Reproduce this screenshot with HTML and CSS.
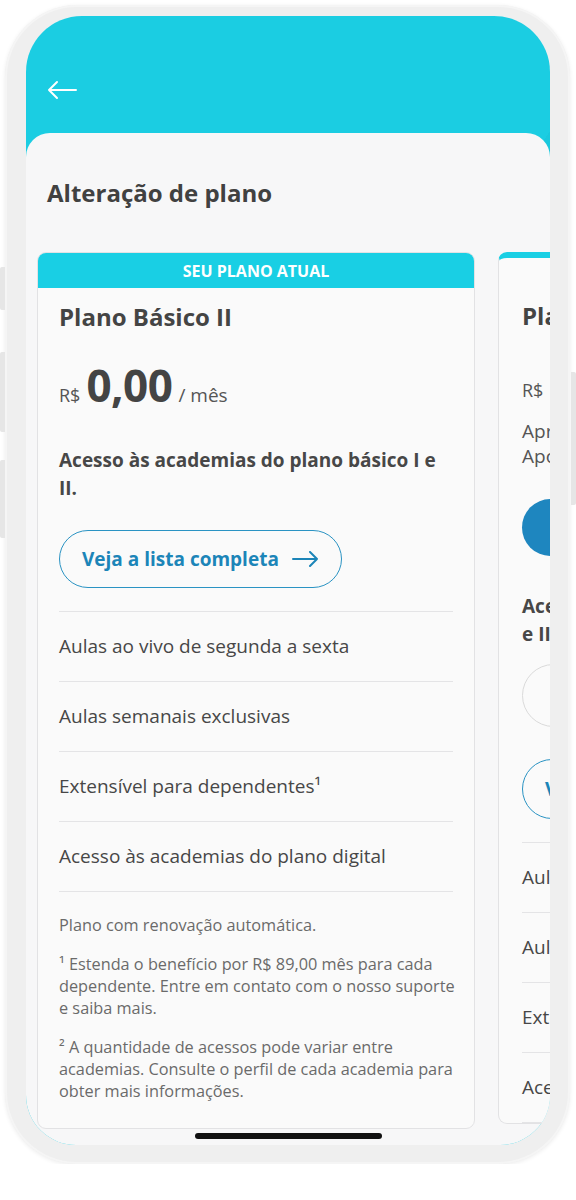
FILE: index.html
```html
<!DOCTYPE html>
<html lang="pt-BR">
<head>
    <meta charset="UTF-8">
    <meta name="viewport" content="width=device-width, initial-scale=1.0">
    <title>Alteração de plano</title>
    <link rel="stylesheet" href="styles.css">
</head>
<body>
    <div class="phone">
        <span class="side-btn side-btn-1"></span>
        <span class="side-btn side-btn-2"></span>
        <span class="side-btn side-btn-3"></span>
        <span class="side-btn side-btn-right"></span>

        <div class="screen">
            <header class="top-bar">
                <svg class="back" width="30" height="20" viewBox="0 0 30 20" fill="none" stroke="#fff" stroke-width="2" stroke-linecap="round" stroke-linejoin="round">
                    <path d="M29 10H2M10 2L2 10L10 18"/>
                </svg>
            </header>

            <main class="sheet">
                <h1 class="page-title">Alteração de plano</h1>

                <div class="plans">
                    <!-- Plano atual -->
                    <section class="plan plan-current">
                        <div class="plan-badge">SEU PLANO ATUAL</div>
                        <div class="plan-body">
                            <h2 class="plan-name">Plano Básico II</h2>
                            <div class="price">
                                <span class="currency">R$</span>
                                <span class="amount">0,00</span>
                                <span class="period">/ mês</span>
                            </div>
                            <p class="plan-desc">Acesso às academias do plano básico I e II.</p>
                            <a href="#" class="btn-outline">
                                Veja a lista completa
                                <svg width="27" height="16" viewBox="0 0 27 16" fill="none" stroke="currentColor" stroke-width="2" stroke-linecap="round" stroke-linejoin="round">
                                    <path d="M1 8H25M18 1L25 8L18 15"/>
                                </svg>
                            </a>
                            <ul class="features">
                                <li>Aulas ao vivo de segunda a sexta</li>
                                <li>Aulas semanais exclusivas</li>
                                <li>Extensível para dependentes¹</li>
                                <li>Acesso às academias do plano digital</li>
                            </ul>
                            <div class="notes">
                                <p>Plano com renovação automática.</p>
                                <p>¹ Estenda o benefício por R$ 89,00 mês para cada dependente. Entre em contato com o nosso suporte e saiba mais.</p>
                                <p>² A quantidade de acessos pode variar entre academias. Consulte o perfil de cada academia para obter mais informações.</p>
                            </div>
                        </div>
                    </section>

                    <!-- Próximo plano (cortado pela tela) -->
                    <section class="plan plan-next">
                        <div class="plan-body">
                            <h2 class="plan-name">Plano Básico I</h2>
                            <div class="price">
                                <span class="currency">R$</span>
                                <span class="amount">0,00</span>
                                <span class="period">/ mês</span>
                            </div>
                            <p class="plan-info">Aproveite 7 dias grátis<br>Após, R$ 49,90 / mês</p>
                            <a href="#" class="btn-solid">Alterar plano</a>
                            <p class="plan-desc">Acesso às academias do plano básico I e II.</p>
                            <a href="#" class="btn-ghost">Comparar</a>
                            <a href="#" class="btn-outline">Veja a lista completa</a>
                            <ul class="features">
                                <li>Aulas ao vivo de segunda a sexta</li>
                                <li>Aulas semanais exclusivas</li>
                                <li>Extensível para dependentes¹</li>
                                <li>Acesso às academias do plano digital</li>
                            </ul>
                        </div>
                    </section>
                </div>
            </main>

            <span class="home-indicator"></span>
        </div>
    </div>
</body>
</html>
```

FILE: styles.css
```css
body {
    margin: 0;
    background: #ffffff;
    font-family: "Open Sans", "Noto Sans", sans-serif;
    color: #474747;
}

/* Marco del teléfono */
.phone {
    position: relative;
    width: 565px;
    height: 1159px;
    margin: 5px 0 0 5px;
    box-sizing: border-box;
    padding: 11px 20px 19px 21px;
    background: #efefef;
    border-radius: 72px;
    box-shadow: 0 1px 4px rgba(0, 0, 0, 0.08), inset 0 0 0 2px #f5f5f5;
}

.side-btn {
    position: absolute;
    left: -5px;
    width: 5px;
    background: #e6e6e6;
    border-radius: 2px 0 0 2px;
}

.side-btn-1 { top: 262px; height: 43px; }
.side-btn-2 { top: 347px; height: 80px; }
.side-btn-3 { top: 455px; height: 78px; }

.side-btn-right {
    left: auto;
    right: -6px;
    top: 367px;
    height: 133px;
    border-radius: 0 2px 2px 0;
}

.screen {
    position: relative;
    height: 100%;
    overflow: hidden;
    border-radius: 56px 56px 50px 50px;
    background: linear-gradient(125deg, #1bcde2 0%, #1bcde2 46%, #19c8dd 46%, #19c8dd 62%, #1bd0e5 62%);
}

.top-bar {
    height: 117px;
    box-sizing: border-box;
    padding: 64px 0 0 21px;
}

.back {
    display: block;
}

/* Hoja blanca */
.sheet {
    height: 1012px;
    box-sizing: border-box;
    padding: 44px 0 0 11px;
    background: #f7f7f8;
    border-radius: 24px 24px 0 0;
}

.page-title {
    margin: 0 0 43px 10px;
    font-size: 24px;
    line-height: 32px;
    font-weight: 700;
    color: #414141;
}

.plans {
    display: flex;
    align-items: flex-start;
    gap: 23px;
}

.plan {
    flex: 0 0 438px;
    box-sizing: border-box;
    background: #fafafa;
    border: 1px solid #e2e2e4;
    border-radius: 9px;
    overflow: hidden;
}

.plan-badge {
    height: 36px;
    line-height: 38px;
    margin: -1px -1px 0;
    background: #19cfe4;
    color: #ffffff;
    font-size: 16px;
    font-weight: 700;
    text-align: center;
}

.plan-body {
    padding: 13px 21px 26px;
}

.plan-name {
    margin: 0;
    font-size: 24px;
    line-height: 32px;
    font-weight: 700;
    color: #444444;
}

.price {
    display: flex;
    align-items: baseline;
    gap: 6px;
    margin-top: 28px;
    line-height: 48px;
}

.currency {
    font-size: 18px;
    line-height: 1;
    color: #555555;
}

.amount {
    font-size: 44px;
    font-weight: 700;
    color: #444444;
    letter-spacing: -0.5px;
}

.period {
    font-size: 19px;
    line-height: 1;
    color: #555555;
}

.plan-desc {
    margin: 37px 0 0;
    font-size: 19px;
    line-height: 28px;
    font-weight: 700;
    color: #474747;
}

.btn-outline {
    display: inline-flex;
    align-items: center;
    gap: 13px;
    height: 58px;
    box-sizing: border-box;
    margin-top: 28px;
    padding: 0 22px;
    border: 1.5px solid #2a93c3;
    border-radius: 29px;
    color: #1c85b8;
    font-size: 19px;
    font-weight: 700;
    text-decoration: none;
}

.features {
    list-style: none;
    margin: 23px 0 0;
    padding: 0;
    border-top: 1px solid #e4e4e6;
}

.features li {
    line-height: 69px;
    border-bottom: 1px solid #e4e4e6;
    font-size: 19px;
    color: #474747;
}

.notes {
    margin: 22px -8px 0 0;
    font-size: 16.3px;
    line-height: 22px;
    color: #6a6a6a;
}

.notes p {
    margin: 0 0 17px;
}

.notes p:last-child {
    margin-bottom: 0;
}

/* Segundo plano */
.plan-next {
    border-top: 6px solid #19cfe4;
}

.plan-next .plan-body {
    padding: 42px 23px 0;
}

.plan-next .price {
    margin-top: 18px;
    line-height: 60px;
}

.plan-info {
    margin: 9px 0 0;
    font-size: 19px;
    line-height: 25px;
    color: #555555;
}

.btn-solid {
    display: block;
    width: 280px;
    height: 57px;
    margin-top: 30px;
    border-radius: 29px;
    background: #1e86bf;
    color: #ffffff;
    font-size: 19px;
    font-weight: 700;
    line-height: 57px;
    text-align: center;
    text-decoration: none;
}

.plan-next .plan-desc {
    margin-top: 36px;
    padding-right: 24px;
}

.btn-ghost {
    display: block;
    width: 200px;
    height: 63px;
    box-sizing: border-box;
    margin-top: 16px;
    border: 1px solid #dadada;
    border-radius: 32px;
    color: transparent;
    text-decoration: none;
}

.plan-next .btn-outline {
    margin-top: 32px;
    height: 60px;
    border-radius: 30px;
}

.home-indicator {
    position: absolute;
    left: 169px;
    bottom: 6px;
    width: 187px;
    height: 6px;
    border-radius: 3px;
    background: #111111;
}
```
